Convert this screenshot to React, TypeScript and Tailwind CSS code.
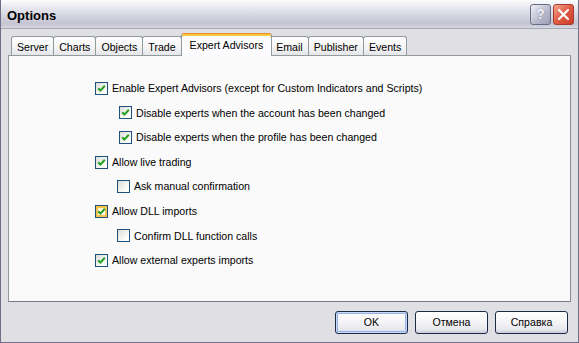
import React from 'react';

const font = 'font-["Liberation_Sans",Arial,sans-serif]';

function Check({ checked, hot }: { checked: boolean; hot?: boolean }) {
  return (
    <span
      className={`relative w-[13px] h-[13px] shrink-0 border border-[#1c5180] flex items-center justify-center ${
        hot
          ? 'bg-[linear-gradient(135deg,#fff4c8,#ffffff)] shadow-[inset_0_0_0_2px_#f6c24c]'
          : 'bg-[linear-gradient(135deg,#dcdcd7,#fbfbf8_70%,#ffffff)]'
      }`}
    >
      {checked && (
        <svg width="9" height="9" viewBox="0 0 9 9" className="relative">
          <path d="M1.2 4.2 L3.4 6.6 L7.8 1.8" stroke="#21a121" strokeWidth="2" fill="none" />
        </svg>
      )}
    </span>
  );
}

function Row({ label, checked, indent, hot }: { label: string; checked: boolean; indent: string; hot?: boolean }) {
  return (
    <div className={`h-[24.6px] flex items-center gap-[4px] ${indent}`}>
      <Check checked={checked} hot={hot} />
      <span className="text-[10.6px] text-black leading-none">{label}</span>
    </div>
  );
}

function Tab({ label, active }: { label: string; active?: boolean }) {
  if (active) {
    return (
      <div className="relative z-10 h-[23px] -mb-[1px] -mx-[1px] px-[8px] flex items-center bg-[#fcfcfe] border border-b-0 border-[#919b9c] rounded-t-[3px] shadow-[inset_0_2px_0_#ffc83c] border-t-[#e68b2c]">
        <span className="text-[10.6px] leading-none">{label}</span>
      </div>
    );
  }
  return (
    <div className="h-[19px] px-[5px] flex items-center bg-[linear-gradient(to_bottom,#ffffff,#f3f3f3_60%,#e6e6ea)] border border-b-0 border-[#919b9c] rounded-t-[3px] -ml-[1px] first:ml-0">
      <span className="text-[10.6px] leading-none pt-[2px]">{label}</span>
    </div>
  );
}

function Btn({ label, def }: { label: string; def?: boolean }) {
  return (
    <button
      className={`w-[73px] h-[23px] rounded-[3px] border border-[#1c2a48] bg-[linear-gradient(to_bottom,#ffffff,#f4f4f6_50%,#e6e6ee_85%,#c8c8d6)] text-[10.6px] leading-none text-black ${
        def ? 'shadow-[inset_0_0_0_1px_#c8d8f8,inset_0_0_0_2px_#98b4e8]' : ''
      }`}
    >
      {label}
    </button>
  );
}

export default function App() {
  return (
    <div className={`w-[579px] h-[343px] flex flex-col bg-[#e0dfe3] border-x border-b border-[#6f7088] ${font}`}>
      {/* Title bar */}
      <div className="h-[29px] shrink-0 flex items-center justify-between pl-[6px] pr-[4px] bg-[linear-gradient(to_bottom,#fdfdfe,#e9e9f0_25%,#d2d2de_60%,#c4c4d3_85%,#d8d8e2)] border-b border-[#a8a8b8]">
        <span className="text-[13px] font-bold text-black pt-[3px]">Options</span>
        <div className="flex gap-[2px] items-center">
          <div className="w-[21px] h-[21px] rounded-[3px] border border-[#6a6c8c] bg-[linear-gradient(135deg,#f2f2f8,#b8b8cc_60%,#9c9cb6)] flex items-center justify-center">
            <span className="text-[14px] font-bold text-[#f4f4f8] [text-shadow:0_0_1px_#50506a]">?</span>
          </div>
          <div className="w-[21px] h-[21px] rounded-[3px] border border-[#a83c30] bg-[linear-gradient(135deg,#f4a890,#e05a44_50%,#c83a28)] flex items-center justify-center">
            <svg width="13" height="13" viewBox="0 0 13 13">
              <path d="M2 2 L11 11 M11 2 L2 11" stroke="#ffffff" strokeWidth="2.2" strokeLinecap="round" />
            </svg>
          </div>
        </div>
      </div>

      {/* Body */}
      <div className="flex-1 flex flex-col px-[7px] pt-[4px]">
        <div className="h-[22px] flex items-end pl-[3px]">
          <Tab label="Server" />
          <Tab label="Charts" />
          <Tab label="Objects" />
          <Tab label="Trade" />
          <Tab label="Expert Advisors" active />
          <Tab label="Email" />
          <Tab label="Publisher" />
          <Tab label="Events" />
        </div>
        <div className="h-[247px] w-[563px] bg-[#fafafa] border border-[#919b9c] border-r-[#8a8a96] border-b-[#7a7a86] pt-[20px] flex flex-col">
          <Row label="Enable Expert Advisors (except for Custom Indicators and Scripts)" checked indent="pl-[86px]" />
          <Row label="Disable experts when the account has been changed" checked indent="pl-[110px]" />
          <Row label="Disable experts when the profile has been changed" checked indent="pl-[110px]" />
          <Row label="Allow live trading" checked indent="pl-[86px]" />
          <Row label="Ask manual confirmation" checked={false} indent="pl-[108px]" />
          <Row label="Allow DLL imports" checked hot indent="pl-[86px]" />
          <Row label="Confirm DLL function calls" checked={false} indent="pl-[108px]" />
          <Row label="Allow external experts imports" checked indent="pl-[86px]" />
        </div>
        <div className="flex justify-end gap-[7px] pr-[3px] mt-[9px]">
          <Btn label="OK" def />
          <Btn label="Отмена" />
          <Btn label="Справка" />
        </div>
      </div>
    </div>
  );
}
